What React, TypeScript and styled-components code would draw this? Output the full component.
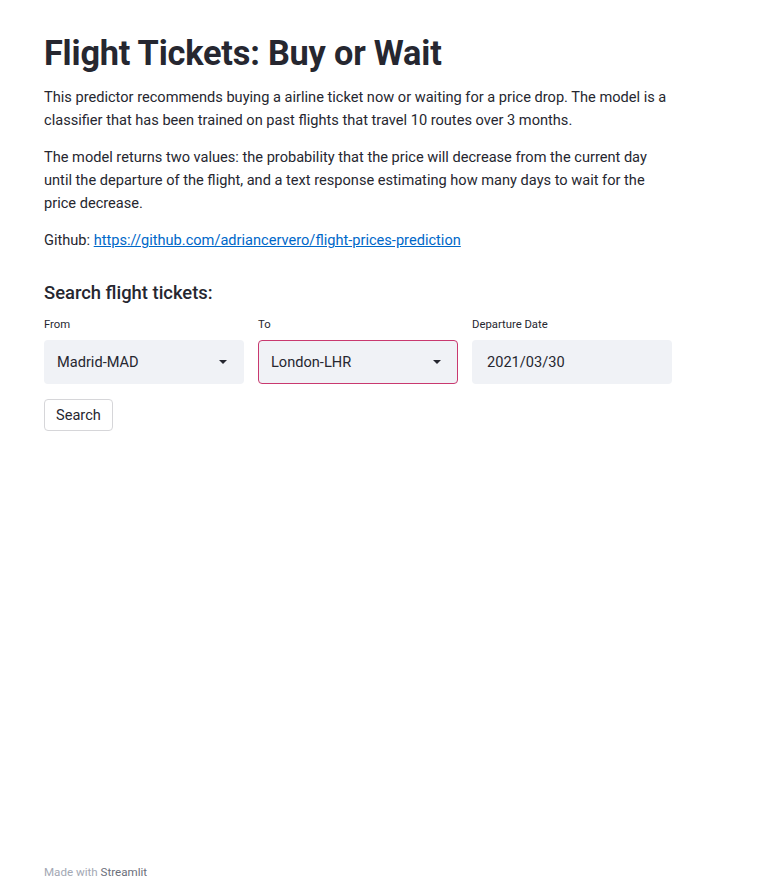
import React, { useState } from 'react';
import styled, { createGlobalStyle } from 'styled-components';

const GlobalStyle = createGlobalStyle`
  html, body {
    margin: 0;
    padding: 0;
    background: #ffffff;
  }
  body {
    font-family: Roboto, "Noto Sans", "Liberation Sans", sans-serif;
    color: #262730;
  }
  * { box-sizing: border-box; }
`;

const Page = styled.div`
  min-height: 880px;
  display: flex;
  flex-direction: column;
`;

const Main = styled.main`
  flex: 1;
  width: 628px;
  margin-left: 44px;
  padding-top: 33px;
`;

const Title = styled.h1`
  font-size: 34.3px;
  font-weight: 700;
  margin: 0 0 12px;
  line-height: 1.2;
  letter-spacing: -0.2px;
`;

const Text = styled.p`
  font-size: 14.6px;
  line-height: 23px;
  margin: 0 0 14px;
`;

const Link = styled.a`
  color: #0068c9;
  text-decoration: underline;
`;

const SubTitle = styled.h3`
  font-size: 18.4px;
  font-weight: 500;
  margin: 29px 0 12px;
  line-height: 1.3;
`;

const Row = styled.div`
  display: grid;
  grid-template-columns: repeat(3, 200px);
  column-gap: 14px;
`;

const Field = styled.div`
  display: flex;
  flex-direction: column;
`;

const Label = styled.label`
  font-size: 11.3px;
  line-height: 16px;
  margin-bottom: 7px;
`;

const Box = styled.div<{ $focused?: boolean }>`
  height: 44px;
  background: #f0f2f6;
  border: 1px solid ${(p) => (p.$focused ? '#c9396f' : 'transparent')};
  border-radius: 4px;
  display: flex;
  align-items: center;
  justify-content: space-between;
  padding: 0 14px 0 12px;
  font-size: 14.6px;
  cursor: pointer;
`;

const DateBox = styled(Box)`
  padding-left: 14px;
`;

const Caret = styled.span`
  width: 0;
  height: 0;
  border-left: 4px solid transparent;
  border-right: 4px solid transparent;
  border-top: 4px solid #262730;
  margin-right: 2px;
`;

const Button = styled.button`
  margin-top: 15px;
  height: 32px;
  padding: 0 11px;
  background: #ffffff;
  border: 1px solid #d6d6d9;
  border-radius: 4px;
  font-family: inherit;
  font-size: 14.6px;
  color: #262730;
  cursor: pointer;
`;

const Footer = styled.footer`
  margin-left: 44px;
  padding-bottom: 0;
  font-size: 11.6px;
  line-height: 16px;
  color: #a3a8b4;

  span {
    color: #6b6f7a;
  }
`;

function App() {
  const [from] = useState('Madrid-MAD');
  const [to] = useState('London-LHR');
  const [date] = useState('2021/03/30');

  return (
    <>
      <GlobalStyle />
      <Page>
        <Main>
          <Title>Flight Tickets: Buy or Wait</Title>
          <Text>
            This predictor recommends buying a airline ticket now or waiting for a price drop. The model is a
            classifier that has been trained on past flights that travel 10 routes over 3 months.
          </Text>
          <Text>
            The model returns two values: the probability that the price will decrease from the current day
            until the departure of the flight, and a text response estimating how many days to wait for the
            price decrease.
          </Text>
          <Text>
            Github:{' '}
            <Link href="#">https://github.com/adriancervero/flight-prices-prediction</Link>
          </Text>

          <SubTitle>Search flight tickets:</SubTitle>
          <Row>
            <Field>
              <Label>From</Label>
              <Box>
                {from}
                <Caret />
              </Box>
            </Field>
            <Field>
              <Label>To</Label>
              <Box $focused>
                {to}
                <Caret />
              </Box>
            </Field>
            <Field>
              <Label>Departure Date</Label>
              <DateBox>{date}</DateBox>
            </Field>
          </Row>
          <Button type="button">Search</Button>
        </Main>
        <Footer>
          Made with <span>Streamlit</span>
        </Footer>
      </Page>
    </>
  );
}

export default App;
